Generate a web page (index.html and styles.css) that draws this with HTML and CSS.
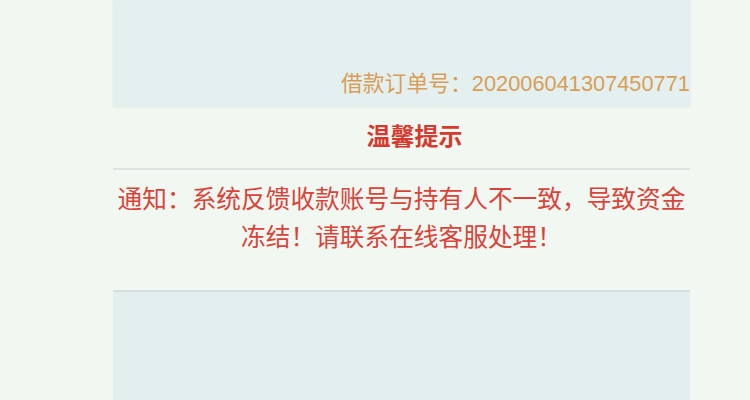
FILE: index.html
```html
<!DOCTYPE html>
<html lang="zh-CN">
<head>
<meta charset="utf-8">
<link rel="stylesheet" href="styles.css">
</head>
<body>
<div class="page">
  <div class="card">
    <div class="order-panel">
      <div class="order-no">借款订单号：202006041307450771</div>
    </div>
    <div class="tip-title">温馨提示</div>
    <div class="notice">通知：系统反馈收款账号与持有人不一致，导致资金冻结！请联系在线客服处理！</div>
    <div class="bottom-panel"></div>
  </div>
</div>
</body>
</html>
```
FILE: styles.css
```css
html, body {
  margin: 0;
  padding: 0;
  background: #f1f7f1;
  font-family: "Liberation Sans", "Noto Sans CJK SC", sans-serif;
}
.page {
  width: 750px;
  height: 400px;
  overflow: hidden;
}
.card {
  width: 577px;
  margin-left: 113px;
  display: flex;
  flex-direction: column;
}
.order-panel {
  height: 106px;
  background: #e3f0ef;
  display: flex;
  align-items: flex-end;
  justify-content: flex-end;
  box-sizing: border-box;
  padding-bottom: 10px;
  box-shadow: 0 1px 2px rgba(200, 215, 210, 0.4);
  overflow: hidden;
}
.order-no {
  color: #d99d58;
  font-size: 21.8px;
  line-height: 25px;
  white-space: nowrap;
}
.tip-title {
  height: 62px;
  line-height: 62px;
  text-align: center;
  padding-left: 26px;
  color: #d63a2f;
  font-size: 24px;
  font-weight: bold;
  border-bottom: 2px solid #dde4df;
}
.notice {
  margin: 0 -4px;
  padding: 11px 0 33px;
  text-align: center;
  color: #d9443a;
  font-size: 24.7px;
  line-height: 38px;
}
.bottom-panel {
  height: 120px;
  background: #e3efef;
  border-top: 2px solid #d6e0de;
}
```
